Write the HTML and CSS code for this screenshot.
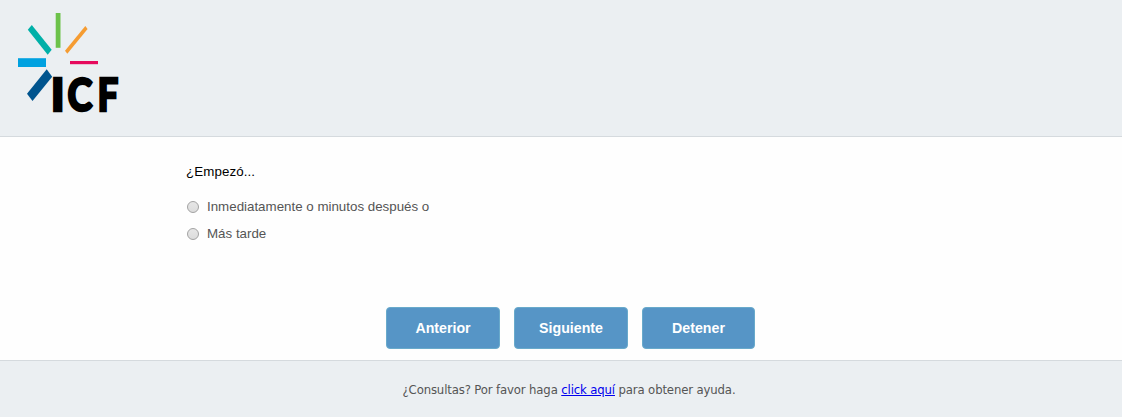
FILE: index.html
```html
<!DOCTYPE html>
<html lang="es">
<head>
    <meta charset="UTF-8">
    <meta name="viewport" content="width=device-width, initial-scale=1.0">
    <title>Encuesta</title>
    <link rel="stylesheet" href="styles.css">
</head>
<body>
    <header>
        <svg class="logo" width="120" height="122" viewBox="17 12 120 122" role="img" aria-label="ICF">
            <path fill="#6cc24a" d="M55.7 13h4.8v34.8h-4.8z"/>
            <path fill="#00b0a8" d="M31.8 25L51.7 49.8L47.7 54.7L27.8 29.8z"/>
            <path fill="#f59c32" d="M85.3 26L87.6 29L67.3 53.7L65 50.7z"/>
            <path fill="#00a1e0" d="M18 58.2h28v8.8h-28z"/>
            <path fill="#e60a5d" d="M70 61h28v3.2h-28z"/>
            <path fill="#00548e" d="M46.7 69.3L52.2 76.8L32.5 101L27 93.8z"/>
            <g class="logo-text">
                <text transform="translate(50.7 111.2)">I</text>
                <text transform="translate(67.5 111.2) scale(0.82 1)">C</text>
                <text transform="translate(97.6 111.2) scale(0.8 1)">F</text>
            </g>
        </svg>
    </header>

    <main>
        <form class="survey">
            <!-- Question -->
            <p class="question">¿Empezó...</p>
            <label class="option"><input type="radio" name="inicio" value="1">Inmediatamente o minutos después o</label>
            <label class="option"><input type="radio" name="inicio" value="2">Más tarde</label>

            <!-- Navigation -->
            <div class="buttons">
                <button type="button">Anterior</button>
                <button type="button">Siguiente</button>
                <button type="button">Detener</button>
            </div>
        </form>
    </main>

    <footer>
        <p>¿Consultas? Por favor haga <a href="#ayuda">click aquí</a> para obtener ayuda.</p>
    </footer>
</body>
</html>
```
FILE: styles.css
```css
* {
    margin: 0;
    padding: 0;
    box-sizing: border-box;
}

body {
    background: #fefefe;
    color: #555;
    font-family: "Liberation Sans", Arial, sans-serif;
    font-size: 13.33px;
}

header {
    height: 137px;
    padding: 12px 17px 0;
    background: #ebeff2;
    border-bottom: 1px solid #d5dade;
}

.logo {
    display: block;
    overflow: visible;
}

.logo-text {
    font-family: Lato, sans-serif;
    font-size: 46px;
    font-weight: 900;
    fill: #000;
    stroke: #000;
    stroke-width: 2.4;
}

.survey {
    height: 223px;
    padding: 26px 0 0 186px;
}

.question {
    margin-bottom: 16px;
    color: #000;
    letter-spacing: 0.1px;
    line-height: 18px;
}

.option {
    display: flex;
    align-items: center;
    height: 18px;
    margin-bottom: 9px;
}

.option input {
    appearance: none;
    width: 12px;
    height: 12px;
    margin: 1px 8px 0 1px;
    border: 1px solid #a2a2a2;
    border-radius: 50%;
    background: linear-gradient(#e6e6e6, #dcdcdc);
}

.option input:checked {
    background: radial-gradient(#555 30%, #ddd 35%);
}

.buttons {
    display: flex;
    gap: 14px;
    margin: 65px 0 0 200px;
}

.buttons button {
    width: 114px;
    height: 42px;
    border: 1px solid #69aacb;
    border-radius: 4px;
    background: #5695c6;
    color: #fff;
    font-family: inherit;
    font-size: 14.2px;
    font-weight: bold;
    cursor: pointer;
}

.buttons button:last-child {
    width: 113px;
}

footer {
    height: 57px;
    padding-top: 20px;
    background: #ebeff2;
    border-top: 1px solid #d5dade;
    font-family: "DejaVu Sans Condensed", Tahoma, sans-serif;
    font-size: 13px;
    letter-spacing: -0.14px;
    line-height: 18px;
    text-align: center;
}

footer p {
    padding-left: 16px;
}

footer a {
    color: #0000ee;
}
```
